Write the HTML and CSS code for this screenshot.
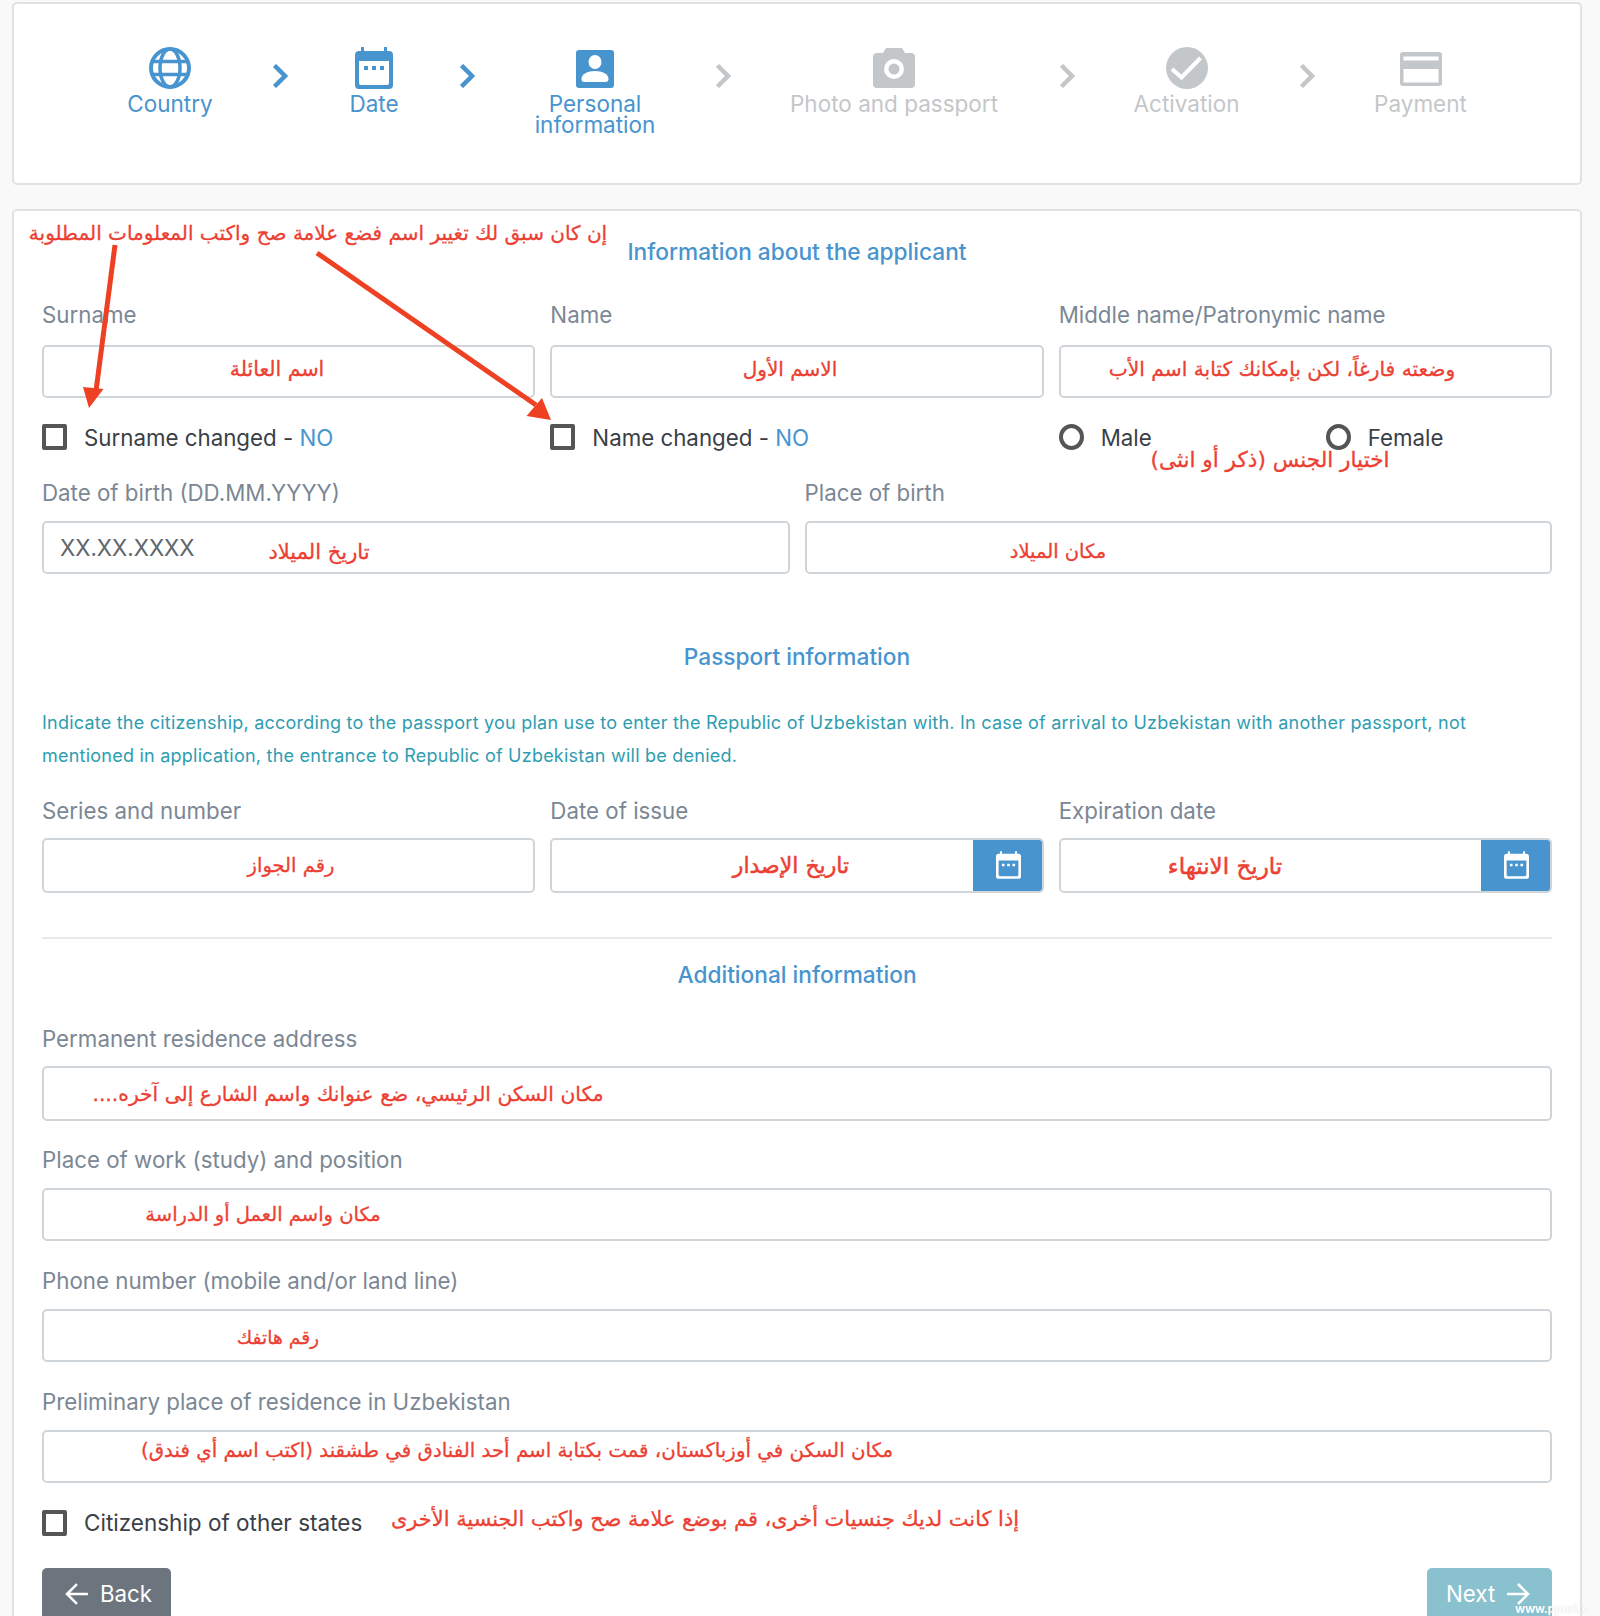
FILE: index.html
```html
<!DOCTYPE html>
<html lang="en">
<head>
<meta charset="utf-8">
<title>Visa application</title>
<link rel="stylesheet" href="styles.css">
</head>
<body>
<svg class="sprite" width="0" height="0" aria-hidden="true">
  <symbol id="cal" viewBox="0 0 38 42">
    <path fill="currentColor" d="M6 0h3v4h20V0h3v4h2a4 4 0 0 1 4 4v30a4 4 0 0 1-4 4H4a4 4 0 0 1-4-4V8a4 4 0 0 1 4-4h2z"/>
    <path fill="var(--hole)" d="M4 14h30v22a2 2 0 0 1-2 2H6a2 2 0 0 1-2-2z"/>
    <path fill="currentColor" d="M9 19h4v4H9zM17 19h4v4h-4zM25 19h4v4h-4z"/>
  </symbol>
  <symbol id="chev" viewBox="0 0 16 24">
    <path fill="none" stroke="currentColor" stroke-width="4.500" d="M2.500 1.500 13 12 2.500 22.500"/>
  </symbol>
</svg>

<section class="card stepper">
  <div class="step done step-country">
    <svg class="ico" width="42" height="42" viewBox="0 0 42 42"><circle cx="21" cy="21" r="19" fill="none" stroke="currentColor" stroke-width="4"/><ellipse cx="21" cy="21" rx="10" ry="19" fill="none" stroke="currentColor" stroke-width="3.500"/><path d="M2 14.500h38M2 27.500h38" stroke="currentColor" stroke-width="3.500"/></svg>
    <span>Country</span>
  </div>
  <svg class="chev done"><use href="#chev"/></svg>
  <div class="step done step-date">
    <svg class="ico cal-ico" width="38" height="42"><use href="#cal"/></svg>
    <span>Date</span>
  </div>
  <svg class="chev done"><use href="#chev"/></svg>
  <div class="step done step-personal">
    <svg class="ico" width="38" height="40" viewBox="0 0 38 40"><rect width="38" height="38" y="2" rx="3" fill="currentColor"/><ellipse cx="19" cy="14" rx="6.500" ry="7" fill="#fff"/><path d="M5.500 31c0-5 6-8 13.500-8s13.500 3 13.500 8c0 2-1 3-3 3h-21c-2 0-3-1-3-3z" fill="#fff"/></svg>
    <span>Personal<br>information</span>
  </div>
  <svg class="chev todo"><use href="#chev"/></svg>
  <div class="step todo step-photo">
    <svg class="ico" width="42" height="40" viewBox="0 0 42 40"><path fill="currentColor" d="M13 0h16l3 5h6a4 4 0 0 1 4 4v27a4 4 0 0 1-4 4H4a4 4 0 0 1-4-4V9a4 4 0 0 1 4-4h6z"/><circle cx="21" cy="21" r="10" fill="#fff"/><circle cx="21" cy="21" r="5.500" fill="currentColor"/></svg>
    <span>Photo and passport</span>
  </div>
  <svg class="chev todo chev-after-photo"><use href="#chev"/></svg>
  <div class="step todo step-activation">
    <svg class="ico" width="42" height="42" viewBox="0 0 42 42"><circle cx="21" cy="21" r="21" fill="currentColor"/><path d="M6 22l9.500 8.500L34.500 11" fill="none" stroke="#fff" stroke-width="4"/></svg>
    <span>Activation</span>
  </div>
  <svg class="chev todo"><use href="#chev"/></svg>
  <div class="step todo step-payment">
    <svg class="ico" width="42" height="40" viewBox="0 0 42 40"><rect y="4" width="42" height="34" rx="3" fill="currentColor"/><path fill="#fff" d="M3.500 8.500h35v4h-35zM3.500 21h35v13.500h-35z"/></svg>
    <span>Payment</span>
  </div>
</section>

<main class="card form">
  <h2 class="title title-first">Information about the applicant</h2>
  <div class="grid g3">
    <div class="field"><label>Surname</label><div class="input"></div></div>
    <div class="field"><label>Name</label><div class="input"></div></div>
    <div class="field"><label>Middle name/Patronymic name</label><div class="input"></div></div>
  </div>
  <div class="grid g3 checks">
    <div class="check"><i class="box"></i>Surname changed -&nbsp;<b>NO</b></div>
    <div class="check"><i class="box"></i>Name changed -&nbsp;<b>NO</b></div>
    <div class="radios">
      <div class="check"><i class="box round"></i>Male</div>
      <div class="check"><i class="box round"></i>Female</div>
    </div>
  </div>
  <div class="grid g2">
    <div class="field"><label>Date of birth (DD.MM.YYYY)</label><div class="input">XX.XX.XXXX</div></div>
    <div class="field"><label>Place of birth</label><div class="input"></div></div>
  </div>

  <h2 class="title title-passport">Passport information</h2>
  <p class="note">Indicate the citizenship, according to the passport you plan use to enter the Republic of Uzbekistan with. In case of arrival to Uzbekistan with another passport, not mentioned in application, the entrance to Republic of Uzbekistan will be denied.</p>
  <div class="grid g3 passport">
    <div class="field"><label>Series and number</label><div class="input tall"></div></div>
    <div class="field"><label>Date of issue</label><div class="input tall group"><span class="addon"><svg class="addon-ico" width="25" height="28"><use href="#cal"/></svg></span></div></div>
    <div class="field"><label>Expiration date</label><div class="input tall group"><span class="addon"><svg class="addon-ico" width="25" height="28"><use href="#cal"/></svg></span></div></div>
  </div>
  <hr class="rule">

  <h2 class="title title-extra">Additional information</h2>
  <div class="field wide wide-first"><label>Permanent residence address</label><div class="input tall"></div></div>
  <div class="field wide"><label>Place of work (study) and position</label><div class="input"></div></div>
  <div class="field wide"><label>Phone number (mobile and/or land line)</label><div class="input"></div></div>
  <div class="field wide"><label>Preliminary place of residence in Uzbekistan</label><div class="input"></div></div>
  <div class="check citizen"><i class="box"></i>Citizenship of other states</div>
  <div class="actions">
    <button class="btn back" type="button"><svg width="26" height="26" viewBox="0 0 26 26"><path d="M24 13H3M13 3 3 13l10 10" fill="none" stroke="currentColor" stroke-width="2.500"/></svg>Back</button>
    <button class="btn next" type="button">Next<svg width="26" height="26" viewBox="0 0 26 26"><path d="M2 13h21M13 3l10 10-10 10" fill="none" stroke="currentColor" stroke-width="2.500"/></svg></button>
  </div>

  <div class="notes" dir="rtl">
    <span class="ar a1">إن كان سبق لك تغيير اسم فضع علامة صح واكتب المعلومات المطلوبة</span>
    <span class="ar a2">اسم العائلة</span>
    <span class="ar a3">الاسم الأول</span>
    <span class="ar a4">وضعته فارغاً، لكن بإمكانك كتابة اسم الأب</span>
    <span class="ar a5">اختيار الجنس (ذكر أو انثى)</span>
    <span class="ar a6">تاريخ الميلاد</span>
    <span class="ar a7">مكان الميلاد</span>
    <span class="ar a8">رقم الجواز</span>
    <span class="ar a9">تاريخ الإصدار</span>
    <span class="ar a10">تاريخ الانتهاء</span>
    <span class="ar a11">مكان السكن الرئيسي، ضع عنوانك واسم الشارع إلى آخره....</span>
    <span class="ar a12">مكان واسم العمل أو الدراسة</span>
    <span class="ar a13">رقم هاتفك</span>
    <span class="ar a14">مكان السكن في أوزباكستان، قمت بكتابة اسم أحد الفنادق في طشقند (اكتب اسم أي فندق)</span>
    <span class="ar a15">إذا كانت لديك جنسيات أخرى، قم بوضع علامة صح واكتب الجنسية الأخرى</span>
  </div>
  <svg class="arrows" width="600" height="220" viewBox="0 0 600 220" aria-hidden="true">
    <path d="M103 36 84 182" stroke="#ee4023" stroke-width="5" fill="none"/>
    <path d="M77 199 71 178 91.500 180z" fill="#ee4023"/>
    <path d="M305 44 524 196" stroke="#ee4023" stroke-width="5" fill="none"/>
    <path d="M539 211 514.500 207 530 189z" fill="#ee4023"/>
  </svg>
</main>
<span class="mark">www.pport.c</span>
</body>
</html>
```
FILE: styles.css
```css
* { box-sizing: border-box; }
html, body { margin: 0; height: 1616px; overflow: hidden; }
body {
  position: relative;
  padding: 2px 18px 0 12px;
  background: #f9f9f9;
  font-family: Inter, "Liberation Sans", sans-serif;
  font-size: 22.300px;
  color: #3a4047;
}
.sprite { position: absolute; }
.card {
  background: #fff;
  border: 2px solid #dfe2e4;
  border-radius: 5px;
}
.stepper {
  height: 183px;
  display: flex;
  align-items: flex-start;
  padding: 43px 0 0 0;
  font-size: 22.500px;
}
.step {
  display: flex;
  flex-direction: column;
  align-items: center;
  text-align: center;
  line-height: 21px;
  flex: none;
}
.step .ico { height: 42px; margin-bottom: 4px; flex: none; }
.done { color: #4894cf; }
.todo { color: #c4c7c9; }
.chev { width: 16px; height: 24px; flex: none; margin-top: 17px; margin-left: 60px; }
.chev-after-photo { margin-left: 61px; }
.step-country { width: 84px; margin-left: 114px; }
.step-date { width: 50px; margin-left: 61px; }
.step-personal { width: 120px; margin-left: 60px; }
.step-photo { width: 208px; margin-left: 59px; }
.step-activation { width: 105px; margin-left: 59px; }
.step-payment { width: 91px; margin-left: 60px; }
.form {
  position: relative;
  margin-top: 24px;
  height: 1420px;
  padding: 0 28px;
}
.title {
  margin: 0;
  text-align: center;
  font-size: 22.700px;
  font-weight: 500;
  line-height: 28px;
  color: #4894cf;
}
.title-first { padding-top: 27px; margin-bottom: 36px; }
.title-passport { margin-top: 69px; }
.title-extra { margin-top: 22px; margin-bottom: 37px; }
.grid { display: grid; gap: 15px; }
.g3 { grid-template-columns: repeat(3, 1fr); }
.g2 { grid-template-columns: repeat(2, 1fr); }
.field label {
  display: block;
  color: #7b8794;
  line-height: 26px;
  margin-bottom: 17px;
}
.g2 .field label { margin-bottom: 15px; }
.passport .field label { margin-bottom: 14px; }
.input {
  height: 53px;
  border: 2px solid #d0d5da;
  border-radius: 5px;
  background: #fff;
  padding: 0 16px;
  line-height: 49px;
  color: #60666c;
}
.input.tall { height: 55px; }
.group { position: relative; overflow: hidden; }
.addon {
  position: absolute;
  right: -2px;
  top: -2px;
  bottom: -2px;
  width: 71px;
  background: #4894cf;
  display: flex;
  align-items: center;
  justify-content: center;
}
.addon-ico { color: #fff; --hole: #4894cf; }
.cal-ico { --hole: #fff; }
.checks { height: 26px; margin: 26px 0 30px; }
.check { display: flex; align-items: center; height: 26px; color: #3a4047; }
.check b { font-weight: 400; color: #4894cf; }
.box {
  flex: none;
  width: 25px;
  height: 26px;
  border: 4px solid #555;
  border-radius: 2px;
  margin-right: 17px;
}
.box.round { border-radius: 50%; }
.radios { display: grid; grid-template-columns: 267px 1fr; }
.note {
  margin: 34.500px 0 26px;
  font-size: 18px;
  letter-spacing: .23px;
  line-height: 33px;
  color: #2f9db1;
}
.rule { border: 0; border-top: 2px solid #e8eaec; margin: 44px 0 0; }
.wide { margin-bottom: 27px; }
.wide-first { margin-bottom: 26px; }
.wide label { margin-bottom: 15px; }
.wide-first label { margin-bottom: 14px; }
.citizen { margin-top: 27px; font-size: 22.500px; }
.actions { display: flex; justify-content: space-between; margin-top: 32px; }
.btn {
  display: inline-flex;
  align-items: center;
  gap: 10px;
  height: 52px;
  border: 0;
  border-radius: 5px;
  color: #fff;
  font: inherit;
  padding: 0 19px;
}
.back { width: 129px; background: #6c757d; padding-left: 22px; }
.next { width: 125px; background: #8ac1cf; }
.notes, .arrows { position: absolute; left: -2px; top: -2px; }
.notes { width: 1568px; height: 1420px; pointer-events: none; }
.ar {
  position: absolute;
  font-family: "DejaVu Sans", sans-serif;
  font-size: 20px;
  -webkit-text-stroke: .3px #ec4033;
  line-height: 24px;
  color: #ec4033;
  white-space: nowrap;
  transform: translate(-50%, -50%);
}
.a1 { left: 306px; top: 24px; }
.a2 { left: 265px; top: 160px; font-size: 20.500px; }
.a3 { left: 778px; top: 160px; }
.a4 { left: 1270px; top: 160px; font-size: 20.200px; }
.a5 { left: 1258px; top: 251px; font-size: 21.600px; }
.a6 { left: 307px; top: 343px; font-size: 21px; }
.a7 { left: 1046px; top: 343px; font-size: 19.500px; }
.a8 { left: 279px; top: 657px; font-size: 19.500px; }
.a9 { left: 779px; top: 657px; font-size: 22px; -webkit-text-stroke-width: .5px; }
.a10 { left: 1213px; top: 657px; font-size: 23px; -webkit-text-stroke-width: .5px; }
.a11 { left: 336px; top: 885px; font-size: 20.300px; }
.a12 { left: 251px; top: 1006px; font-size: 19.500px; }
.a13 { left: 266px; top: 1129px; font-size: 18.700px; }
.a14 { left: 505px; top: 1242px; font-size: 19.800px; }
.a15 { left: 693px; top: 1310px; font-size: 20.900px; }
.mark {
  position: absolute;
  left: 1515px;
  bottom: 0;
  font-size: 12px;
  line-height: 14px;
  font-weight: 700;
  letter-spacing: -.3px;
  color: #fff;
  text-shadow: 0 0 1px rgba(0,0,0,.2);
}
```
